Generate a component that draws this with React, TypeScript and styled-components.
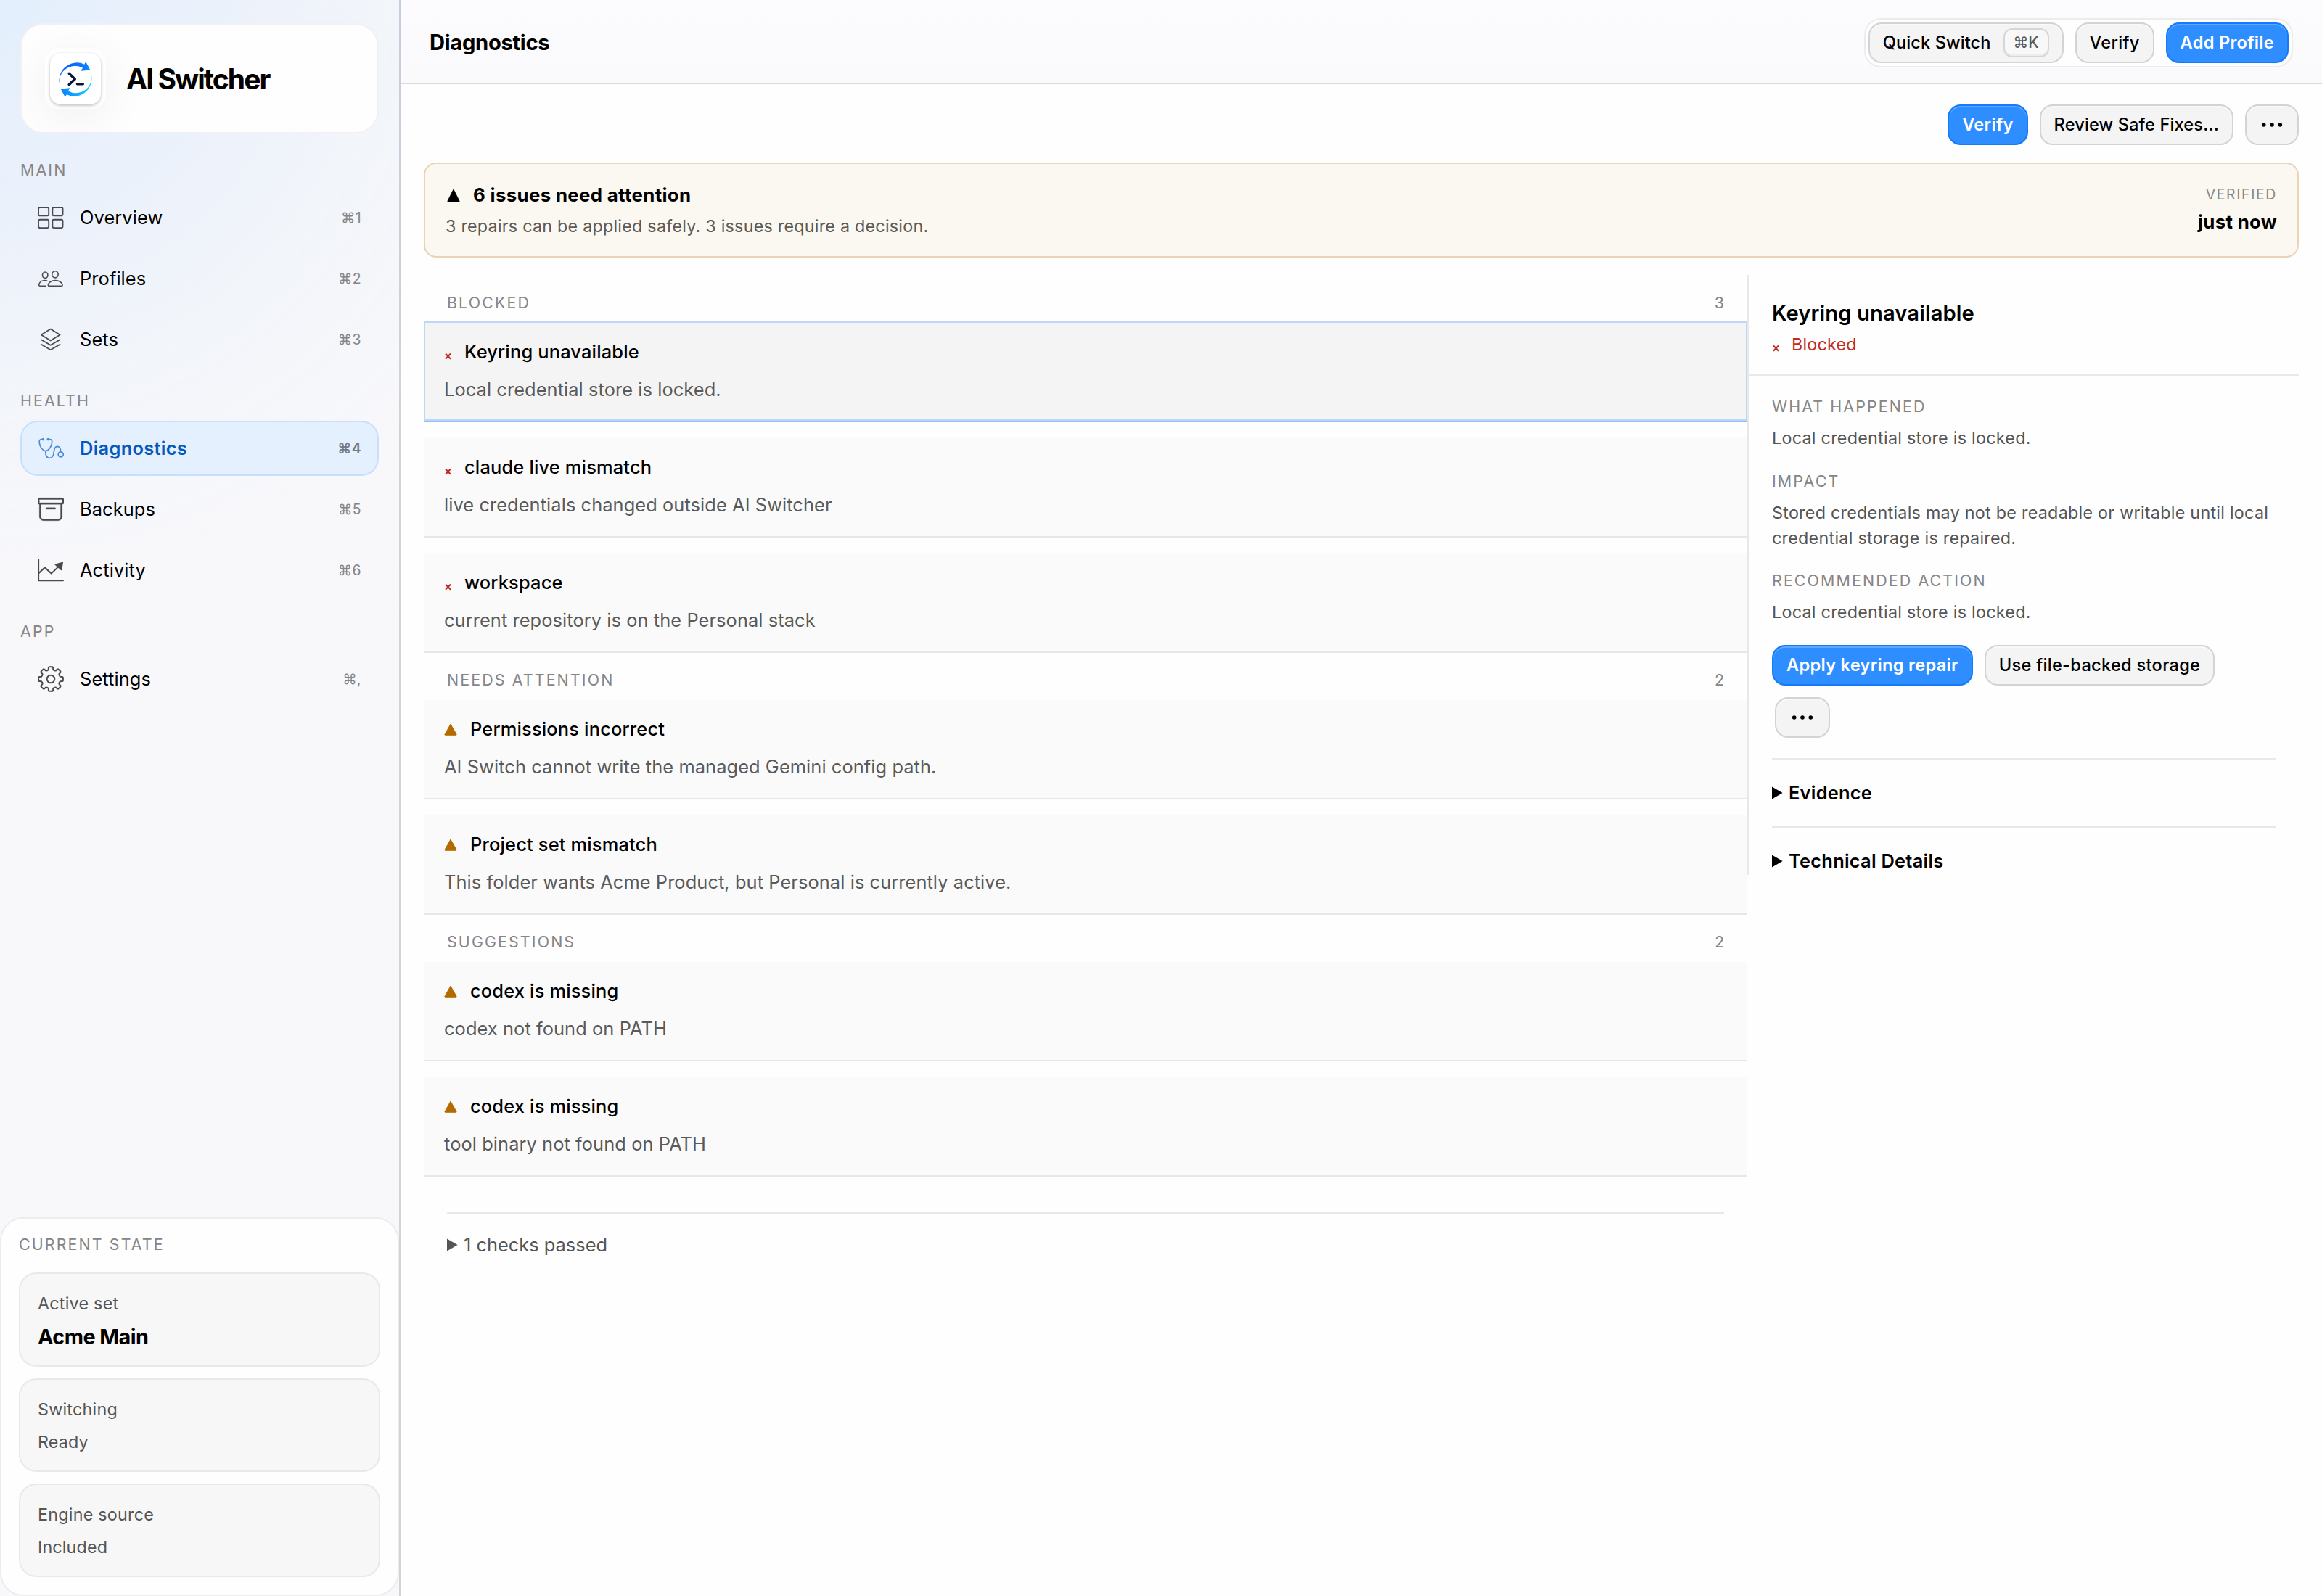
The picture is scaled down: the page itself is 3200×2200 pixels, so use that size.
import React from "react";
import styled, { createGlobalStyle, css } from "styled-components";
import { BsArchive } from "react-icons/bs";

const GlobalStyle = createGlobalStyle`
  *, *::before, *::after { box-sizing: border-box; }
  html, body { margin: 0; padding: 0; background: #fefefe; }
  body {
    font-family: Inter, "Liberation Sans", sans-serif;
    color: #000;
    -webkit-font-smoothing: antialiased;
    overflow: hidden;
  }
  button { font-family: inherit; }
`;

const Window = styled.div`
  display: flex;
  width: 3200px;
  height: 2200px;
  background: #fefefe;
`;

/* ---------- Sidebar ---------- */

const Sidebar = styled.aside`
  display: flex;
  flex-direction: column;
  flex: none;
  width: 552px;
  height: 2200px;
  border-right: 2px solid #d2d3d7;
  border-image: linear-gradient(180deg, #c3cedd 0, #cfd2da 520px, #d3d3d6 900px) 1;
  background:
    radial-gradient(circle at 0 0, #e3effd 0, #ebf1fb 300px, #f2f5fa 520px, rgba(248, 248, 251, 0) 800px),
    #f8f8fb;
`;

const Navigation = styled.nav`
  display: flex;
  flex-direction: column;
  padding: 32px 28px 0;
`;

const Brand = styled.div`
  display: flex;
  align-items: center;
  gap: 28px;
  height: 152px;
  padding: 0 32px;
  border: 2px solid #f1f1f2;
  border-radius: 32px;
  overflow: hidden;
  background: #fefefe;
`;

const LogoFrame = styled.div`
  display: flex;
  align-items: center;
  justify-content: center;
  width: 84px;
  height: 84px;
  border-radius: 20px;
  background: #fefefe;
  box-shadow: 0 12px 56px 8px rgba(0, 0, 0, 0.045);
`;

const LogoTile = styled.div`
  width: 70px;
  height: 71px;
  border-radius: 15px;
  background: #fff;
  box-shadow: 0 2px 4px rgba(0, 0, 0, 0.22), 0 0 2px rgba(0, 0, 0, 0.06);

  svg { display: block; }
`;

const BrandName = styled.div`
  padding-top: 2px;
  font-size: 39px;
  line-height: 48px;
  font-weight: 700;
  letter-spacing: -1.95px;
  white-space: nowrap;
`;

const Caption = styled.div`
  font-size: 21.4px;
  line-height: 26px;
  letter-spacing: 2.12px;
  text-transform: uppercase;
  color: #858588;
  white-space: nowrap;
`;

const NavCaption = styled(Caption)<{ $first?: boolean }>`
  margin: ${(p) => (p.$first ? 37 : 33)}px 0 15px;
`;

const NavList = styled.div`
  display: flex;
  flex-direction: column;
  gap: 8px;
`;

const NavItem = styled.a<{ $active?: boolean }>`
  display: flex;
  align-items: center;
  height: 76px;
  padding: 0 22px;
  border: 2px solid transparent;
  border-radius: 24px;
  color: #000;

  ${(p) =>
    p.$active &&
    css`
      background: #e4f0fe;
      border-color: #c6dffd;
      color: #0558bf;
    `}
`;

const NavIcon = styled.span<{ $active?: boolean }>`
  display: flex;
  width: 36px;
  height: 36px;
  color: ${(p) => (p.$active ? "#4a8bd9" : "#4a4a4c")};
`;

const NavText = styled.span<{ $active?: boolean }>`
  flex: 1;
  margin-left: 22px;
  font-size: 25.4px;
  line-height: 36px;
  font-weight: ${(p) => (p.$active ? 600 : 400)};
  letter-spacing: ${(p) => (p.$active ? 0.3 : 0.1)}px;
`;

const Shortcut = styled.span<{ $active?: boolean }>`
  font-size: 19.4px;
  line-height: 24px;
  font-weight: ${(p) => (p.$active ? 600 : 400)};
  letter-spacing: 0.4px;
  color: ${(p) => (p.$active ? "#76797e" : "#858588")};
`;

const StatePanel = styled.section`
  display: flex;
  flex-direction: column;
  margin-top: auto;
  padding: 22px 24px 24px;
  border: 2px solid #ececee;
  border-radius: 32px;
  background: #fefefe;
`;

const StateCards = styled.div`
  display: flex;
  flex-direction: column;
  gap: 16px;
  margin-top: 26px;
`;

const StateCard = styled.div`
  display: flex;
  flex-direction: column;
  gap: 10px;
  padding: 26px 24px 19px;
  border: 2px solid #e9e9e9;
  border-radius: 24px;
  background: #f7f7f7;
`;

const StateLabel = styled.div`
  font-size: 23.3px;
  line-height: 30px;
  letter-spacing: 0.24px;
  color: #555;
`;

const StateValue = styled.div<{ $strong?: boolean }>`
  font-size: 23.3px;
  line-height: 40px;
  letter-spacing: 0.15px;
  color: #555;

  ${(p) =>
    p.$strong &&
    css`
      font-size: 28.8px;
      line-height: 41px;
      font-weight: 700;
      letter-spacing: -0.55px;
      color: #000;
    `}
`;

/* ---------- Buttons ---------- */

const Button = styled.button<{ $primary?: boolean; $inset?: number; $tracking?: number }>`
  display: flex;
  align-items: center;
  gap: 17px;
  height: 56px;
  margin: 0 0 0 ${(p) => p.$inset ?? 0}px;
  padding: 0 18px;
  border: 2px solid ${(p) => (p.$primary ? "#147bfd" : "#d3d3d3")};
  border-radius: 18px;
  background: ${(p) => (p.$primary ? "#2e8dff" : "#f4f4f4")};
  box-shadow: inset 0 2px 0 ${(p) => (p.$primary ? "rgba(255,255,255,0.24)" : "rgba(255,255,255,0.45)")};
  font-size: 23.6px;
  line-height: 30px;
  font-weight: ${(p) => (p.$primary ? 600 : 500)};
  letter-spacing: ${(p) => p.$tracking ?? 0.29}px;
  color: ${(p) => (p.$primary ? "#fff" : "#000")};
  white-space: nowrap;
`;

const Keycap = styled.kbd`
  display: flex;
  align-items: center;
  justify-content: center;
  width: 63px;
  height: 40px;
  border: 2px solid #d6d6d6;
  border-radius: 12px;
  background: #f8f8f8;
  box-shadow: inset 0 -2px 0 #ececec;
  font: 500 21px/26px Inter, "Liberation Sans", sans-serif;
  color: #5a5a5a;
`;

const MoreLabel = styled.span<{ $width: number }>`
  display: flex;
  justify-content: center;
  width: ${(p) => p.$width}px;
`;

/* ---------- Main area ---------- */

const Main = styled.main`
  display: flex;
  flex-direction: column;
  flex: 1;
  min-width: 0;
`;

const Header = styled.header`
  display: flex;
  align-items: center;
  justify-content: space-between;
  height: 116px;
  padding: 4px 40px 0 40px;
  border-bottom: 2px solid #d9dadd;
  background: linear-gradient(180deg, #fcfcfe, #fafafc);
`;

const PageTitle = styled.h1`
  margin: 0;
  font-size: 29.2px;
  line-height: 40px;
  font-weight: 650;
  letter-spacing: -0.33px;
`;

const ButtonGroup = styled.div`
  display: flex;
  gap: 16px;
  padding: 4px;
  border: 2px solid #ececed;
  border-radius: 23px;
  background: #fefefe;
`;

const Content = styled.div`
  display: flex;
  flex-direction: column;
  gap: 24px;
  padding: 28px 32px 0;
`;

const Toolbar = styled.div`
  display: flex;
  justify-content: flex-end;
  gap: 16px;
`;

const Banner = styled.section`
  display: flex;
  align-items: center;
  justify-content: space-between;
  height: 131px;
  padding: 0 28px;
  border: 2px solid #ead4b5;
  border-radius: 17px;
  background: #fbf8f1;
`;

const BannerSummary = styled.div`
  display: flex;
  flex-direction: column;
  gap: 11px;
`;

const BannerTitle = styled.div`
  display: flex;
  align-items: center;
  gap: 18px;
  padding-left: 2px;
  font-size: 25.8px;
  line-height: 34px;
  font-weight: 650;
  letter-spacing: 0.35px;
`;

const BannerText = styled.div`
  font-size: 23.3px;
  line-height: 30px;
  letter-spacing: 0.24px;
  color: #5b5a58;
`;

const Verified = styled.div`
  display: flex;
  flex-direction: column;
  align-items: flex-end;
  gap: 9px;
`;

const VerifiedLabel = styled.div`
  font-size: 19.4px;
  line-height: 24px;
  letter-spacing: 1.65px;
  text-transform: uppercase;
  color: #888683;
`;

const VerifiedValue = styled.div`
  font-size: 25.8px;
  line-height: 34px;
  font-weight: 650;
  letter-spacing: 0.3px;
`;

const Columns = styled.div`
  display: grid;
  grid-template-columns: 1824px 760px;
  align-items: start;
`;

/* ---------- Issue list ---------- */

const IssueList = styled.section`
  display: flex;
  flex-direction: column;
  padding-top: 1px;
`;

const GroupHeader = styled.div`
  display: flex;
  justify-content: space-between;
  height: 63px;
  padding: 24px 32px 0;
`;

const GroupCount = styled.span`
  font-size: 21.4px;
  line-height: 26px;
  color: #858585;
`;

const GroupRows = styled.div`
  display: flex;
  flex-direction: column;
  gap: 20px;
`;

const IssueRow = styled.article<{ $selected?: boolean }>`
  display: flex;
  flex-direction: column;
  gap: 16px;
  height: 139px;
  padding: 24px 28px 0;
  border-bottom: 2px solid #e7e7e7;
  background: #fafafa;
  box-shadow: inset 0 2px 0 #fdfdfd;

  ${(p) =>
    p.$selected &&
    css`
      border-bottom-color: #8fbffa;
      background: #f4f4f4;
      box-shadow: inset 0 0 0 2px #bdd8f7;
    `}
`;

const IssueTitle = styled.div<{ $wide?: boolean }>`
  display: flex;
  align-items: center;
  gap: ${(p) => (p.$wide ? 18 : 17)}px;
  font-size: 25.4px;
  line-height: 36px;
  font-weight: 500;
  letter-spacing: 0.18px;
`;

const IssueText = styled.div`
  font-size: 25.4px;
  line-height: 36px;
  letter-spacing: 0.08px;
  color: #5a5a5a;
`;

const Passed = styled.div`
  display: flex;
  align-items: center;
  gap: 8px;
  margin: 49px 32px 0;
  padding-top: 25px;
  border-top: 2px solid #e9e9e9;
  font-size: 25.4px;
  line-height: 36px;
  color: #555;
`;

/* ---------- Detail pane ---------- */

const Detail = styled.aside`
  display: flex;
  flex-direction: column;
  height: 827px;
  border-left: 2px solid #e8e8e8;
`;

const DetailHead = styled.div`
  display: flex;
  flex-direction: column;
  gap: 9px;
  padding: 34px 32px 26px;
  border-bottom: 2px solid #e9e9e9;
`;

const DetailTitle = styled.h2`
  margin: 0;
  font-size: 29.2px;
  line-height: 37px;
  font-weight: 600;
  letter-spacing: 0.1px;
`;

const Severity = styled.div`
  display: flex;
  align-items: center;
  gap: 16px;
  font-size: 23.3px;
  line-height: 31px;
  letter-spacing: 0.2px;
  color: #c4291e;
`;

const DetailBody = styled.div`
  display: flex;
  flex-direction: column;
  padding: 28px 32px 0;
`;

const Facts = styled.div`
  display: flex;
  flex-direction: column;
  gap: 27.5px;
`;

const FactLabel = styled(Caption)`
  line-height: 28px;
  margin-bottom: 12px;
  color: #858585;
`;

const FactText = styled.div`
  font-size: 23.3px;
  line-height: 35px;
  letter-spacing: 0.27px;
  color: #555;
`;

const Actions = styled.div`
  display: flex;
  flex-wrap: wrap;
  gap: 16px;
  margin: 28px 0;
`;

const Disclosure = styled.div`
  display: flex;
  align-items: center;
  gap: 8px;
  height: 94px;
  padding: 0 0 1px;
  border-top: 2px solid #e9e9e9;
  font-size: 25.4px;
  line-height: 37px;
  font-weight: 600;
  letter-spacing: 0.25px;
`;

/* ---------- Drawings ---------- */

const stroke = {
  fill: "none",
  stroke: "currentColor",
  strokeLinecap: "round" as const,
  strokeLinejoin: "round" as const,
};

const GridIcon = () => (
  <svg width="36" height="36" viewBox="0 0 36 36" {...stroke} strokeWidth="1.9">
    <rect x="1" y="4" width="14.2" height="11.3" rx="2" />
    <rect x="20.3" y="4" width="14.2" height="11.3" rx="2" />
    <rect x="1" y="20.8" width="14.2" height="11.3" rx="2" />
    <rect x="20.3" y="20.8" width="14.2" height="11.3" rx="2" />
  </svg>
);

const PeopleIcon = () => (
  <svg width="36" height="36" viewBox="0 0 36 36" {...stroke} strokeWidth="1.6">
    <ellipse cx="10.2" cy="13.2" rx="3.7" ry="4.2" />
    <ellipse cx="24" cy="12.3" rx="4.2" ry="4.6" />
    <path d="M12.6 20.9c-.8-.3-1.7-.4-2.6-.4-4.6 0-7.6 2.7-8.2 5.6-.3 1.3.1 2.2 1.4 2.2h7.6" />
    <path d="M24.2 20.5c5 0 8.8 2.8 9.7 5.5.5 1.6-.1 2.3-1.5 2.3H16c-1.4 0-2-.7-1.5-2.3.9-2.7 4.7-5.5 9.7-5.5z" />
  </svg>
);

const LayersIcon = () => (
  <svg width="36" height="36" viewBox="0 0 36 36" {...stroke} strokeWidth="1.8">
    <path d="M17.7 3.6 30.6 11.6 17.7 19.6 4.8 11.6z" />
    <path d="M4.8 18.3 17.7 25.8 30.6 18.3" />
    <path d="M4.8 24.7 17.7 32.2 30.6 24.7" />
  </svg>
);

const StethoscopeIcon = () => (
  <svg width="36" height="36" viewBox="0 0 36 36" {...stroke} strokeWidth="1.7">
    <path d="M7.3 5.6H5.2C3.2 5.6 2.1 7 2.2 9.2 2.4 15.5 6 20.5 10.7 21.9 15.5 20.5 19.4 15.5 19.7 9.2 19.8 7 18.6 5.6 16.6 5.6H14.2" />
    <path d="M10.7 21.9C10.7 27.5 12.5 31.4 16.4 31.4 20.5 31.4 21.7 28 22.2 23.5 22.6 19 23.6 15.3 26.9 15.3 30 15.3 31.6 18.5 31.7 22.6" />
    <circle cx="31.7" cy="26.3" r="3.5" />
    <circle cx="7.3" cy="5.6" r="1.3" fill="currentColor" strokeWidth="1" />
    <circle cx="14.2" cy="5.6" r="1.3" fill="currentColor" strokeWidth="1" />
  </svg>
);

const TrendIcon = () => (
  <svg width="36" height="36" viewBox="0 0 36 36" {...stroke} strokeWidth="2">
    <path d="M1.1 3.2V32.3H35" />
    <path d="M1.6 22 9.7 14.2 18.7 22.6 29 12.6" />
    <path d="M34.3 7.3 24.2 10.2 32.6 17.6z" fill="currentColor" strokeWidth="1.4" />
  </svg>
);

/* Eight flat-topped teeth placed evenly round the hub. */
const gearOutline = (() => {
  const point = (radius: number, degrees: number) => {
    const a = (degrees * Math.PI) / 180;
    return `${(18 + radius * Math.cos(a)).toFixed(2)} ${(18 + radius * Math.sin(a)).toFixed(2)}`;
  };
  const parts: string[] = [];
  for (let i = 0; i < 8; i += 1) {
    const c = i * 45 - 90;
    parts.push(`${i === 0 ? "M" : "L"}${point(13.3, c - 14)}`);
    parts.push(`L${point(16.2, c - 11)}`);
    parts.push(`Q${point(17, c - 9.5)} ${point(17, c - 7)}`);
    parts.push(`L${point(17, c + 7)}`);
    parts.push(`Q${point(17, c + 9.5)} ${point(16.2, c + 11)}`);
    parts.push(`L${point(13.3, c + 14)}`);
    parts.push(`Q${point(12.2, c + 22.5)} ${point(13.3, c + 31)}`);
  }
  return `${parts.join("")}Z`;
})();

const GearIcon = () => (
  <svg width="36" height="36" viewBox="0 0 36 36" {...stroke} strokeWidth="2">
    <path d={gearOutline} />
    <circle cx="18" cy="18" r="5.3" />
  </svg>
);

const Logo = () => (
  <svg width="70" height="71" viewBox="0 0 70 71">
    <defs>
      <linearGradient id="sweepTop" x1="0" y1="0.7" x2="1" y2="0.3">
        <stop offset="0" stopColor="#1a6dff" />
        <stop offset="0.5" stopColor="#0563ff" />
        <stop offset="1" stopColor="#0a86ff" />
      </linearGradient>
      <linearGradient id="sweepBottom" x1="1" y1="0.5" x2="0" y2="0.7">
        <stop offset="0" stopColor="#0a84ff" />
        <stop offset="0.6" stopColor="#10baff" />
        <stop offset="1" stopColor="#22d3f2" />
      </linearGradient>
    </defs>
    <path
      fill="url(#sweepTop)"
      d="M13.8 45.4A24.3 24.3 0 0 1 47.2 15.7L49.2 12 55.3 23.6 42.6 24.8 45 20.6A21.5 21.5 0 0 0 13.8 45.4Z"
    />
    <path
      fill="url(#sweepBottom)"
      transform="rotate(180 35 36.5)"
      d="M13.8 45.4A24.3 24.3 0 0 1 47.2 15.7L49.2 12 55.3 23.6 42.6 24.8 45 20.6A21.5 21.5 0 0 0 13.8 45.4Z"
    />
    <path
      d="M26.2 28.3 34.3 36 26.2 43.6M37.5 42.8H45.3"
      fill="none"
      stroke="#07163a"
      strokeWidth="3.5"
      strokeLinecap="round"
      strokeLinejoin="round"
    />
  </svg>
);

const WarnMark = ({ width, height, color }: { width: number; height: number; color: string }) => (
  <svg width={width} height={height} viewBox="0 0 16 16" preserveAspectRatio="none">
    <path
      d="M8 .9 15.1 14.3Q15.5 15.4 14.4 15.4H1.6Q.5 15.4.9 14.3Z"
      fill={color}
      stroke={color}
      strokeWidth=".8"
      strokeLinejoin="round"
    />
  </svg>
);

const CrossSlot = styled.svg`
  flex: none;
  margin-top: 11px;
`;

const CrossMark = () => (
  <CrossSlot width="11" height="10" viewBox="0 0 11 10">
    <path d="M2 1.5 9 8.7M9 1.5 2 8.7" fill="none" stroke="#c4291e" strokeWidth="2" />
  </CrossSlot>
);

const Triangle = ({ color }: { color: string }) => (
  <svg width="15" height="18" viewBox="0 0 15 18">
    <path d="M0 .5V17.5L14.6 9z" fill={color} />
  </svg>
);

const MoreDots = ({ width }: { width: number }) => (
  <MoreLabel $width={width}>
    <svg width="30" height="8" viewBox="0 0 30 8">
      <circle cx="3.7" cy="4" r="2.8" />
      <circle cx="15" cy="4" r="2.8" />
      <circle cx="26.3" cy="4" r="2.8" />
    </svg>
  </MoreLabel>
);

/* ---------- Data ---------- */

type Entry = { name: string; keys: string; icon: React.ReactNode; active?: boolean };

const navigation: { caption: string; items: Entry[] }[] = [
  {
    caption: "Main",
    items: [
      { name: "Overview", keys: "⌘1", icon: <GridIcon /> },
      { name: "Profiles", keys: "⌘2", icon: <PeopleIcon /> },
      { name: "Sets", keys: "⌘3", icon: <LayersIcon /> },
    ],
  },
  {
    caption: "Health",
    items: [
      { name: "Diagnostics", keys: "⌘4", icon: <StethoscopeIcon />, active: true },
      { name: "Backups", keys: "⌘5", icon: <BsArchive size={36} strokeWidth={0.15} /> },
      { name: "Activity", keys: "⌘6", icon: <TrendIcon /> },
    ],
  },
  { caption: "App", items: [{ name: "Settings", keys: "⌘,", icon: <GearIcon /> }] },
];

const state = [
  { label: "Active set", value: "Acme Main", strong: true },
  { label: "Switching", value: "Ready" },
  { label: "Engine source", value: "Included" },
];

type Issue = { title: string; text: string; selected?: boolean };

const groups: { caption: string; blocked?: boolean; count: number; issues: Issue[] }[] = [
  {
    caption: "Blocked",
    blocked: true,
    count: 3,
    issues: [
      { title: "Keyring unavailable", text: "Local credential store is locked.", selected: true },
      { title: "claude live mismatch", text: "live credentials changed outside AI Switcher" },
      { title: "workspace", text: "current repository is on the Personal stack" },
    ],
  },
  {
    caption: "Needs attention",
    count: 2,
    issues: [
      { title: "Permissions incorrect", text: "AI Switch cannot write the managed Gemini config path." },
      {
        title: "Project set mismatch",
        text: "This folder wants Acme Product, but Personal is currently active.",
      },
    ],
  },
  {
    caption: "Suggestions",
    count: 2,
    issues: [
      { title: "codex is missing", text: "codex not found on PATH" },
      { title: "codex is missing", text: "tool binary not found on PATH" },
    ],
  },
];

const facts = [
  { label: "What happened", text: "Local credential store is locked." },
  {
    label: "Impact",
    text: "Stored credentials may not be readable or writable until local credential storage is repaired.",
  },
  { label: "Recommended action", text: "Local credential store is locked." },
];

export default function App() {
  return (
    <>
      <GlobalStyle />
      <Window>
        <Sidebar>
          <Navigation>
            <Brand>
              <LogoFrame>
                <LogoTile>
                  <Logo />
                </LogoTile>
              </LogoFrame>
              <BrandName>AI Switcher</BrandName>
            </Brand>
            {navigation.map((section, index) => (
              <React.Fragment key={section.caption}>
                <NavCaption $first={index === 0}>{section.caption}</NavCaption>
                <NavList>
                  {section.items.map((item) => (
                    <NavItem key={item.name} $active={item.active}>
                      <NavIcon $active={item.active}>{item.icon}</NavIcon>
                      <NavText $active={item.active}>{item.name}</NavText>
                      <Shortcut $active={item.active}>{item.keys}</Shortcut>
                    </NavItem>
                  ))}
                </NavList>
              </React.Fragment>
            ))}
          </Navigation>
          <StatePanel>
            <Caption>Current state</Caption>
            <StateCards>
              {state.map((card) => (
                <StateCard key={card.label}>
                  <StateLabel>{card.label}</StateLabel>
                  <StateValue $strong={card.strong}>{card.value}</StateValue>
                </StateCard>
              ))}
            </StateCards>
          </StatePanel>
        </Sidebar>

        <Main>
          <Header>
            <PageTitle>Diagnostics</PageTitle>
            <ButtonGroup>
              <Button $tracking={0.1}>
                Quick Switch<Keycap>⌘K</Keycap>
              </Button>
              <Button>Verify</Button>
              <Button $primary>Add Profile</Button>
            </ButtonGroup>
          </Header>

          <Content>
            <Toolbar>
              <Button $primary>Verify</Button>
              <Button $tracking={0.13}>Review Safe Fixes...</Button>
              <Button aria-label="More">
                <MoreDots width={34} />
              </Button>
            </Toolbar>

            <Banner>
              <BannerSummary>
                <BannerTitle>
                  <WarnMark width={18} height={19} color="#000" />
                  6 issues need attention
                </BannerTitle>
                <BannerText>3 repairs can be applied safely. 3 issues require a decision.</BannerText>
              </BannerSummary>
              <Verified>
                <VerifiedLabel>Verified</VerifiedLabel>
                <VerifiedValue>just now</VerifiedValue>
              </Verified>
            </Banner>

            <Columns>
              <IssueList>
                {groups.map((group) => (
                  <React.Fragment key={group.caption}>
                    <GroupHeader>
                      <Caption>{group.caption}</Caption>
                      <GroupCount>{group.count}</GroupCount>
                    </GroupHeader>
                    <GroupRows>
                      {group.issues.map((issue) => (
                        <IssueRow key={issue.text} $selected={issue.selected}>
                          <IssueTitle $wide={!group.blocked}>
                            {group.blocked ? (
                              <CrossMark />
                            ) : (
                              <WarnMark width={18} height={17} color="#b36b00" />
                            )}
                            {issue.title}
                          </IssueTitle>
                          <IssueText>{issue.text}</IssueText>
                        </IssueRow>
                      ))}
                    </GroupRows>
                  </React.Fragment>
                ))}
                <Passed>
                  <Triangle color="#555" />1 checks passed
                </Passed>
              </IssueList>

              <Detail>
                <DetailHead>
                  <DetailTitle>Keyring unavailable</DetailTitle>
                  <Severity>
                    <CrossMark />
                    Blocked
                  </Severity>
                </DetailHead>
                <DetailBody>
                  <Facts>
                    {facts.map((fact) => (
                      <div key={fact.label}>
                        <FactLabel>{fact.label}</FactLabel>
                        <FactText>{fact.text}</FactText>
                      </div>
                    ))}
                  </Facts>
                  <Actions>
                    <Button $primary>Apply keyring repair</Button>
                    <Button>Use file-backed storage</Button>
                    <Button $inset={4} aria-label="More actions">
                      <MoreDots width={36} />
                    </Button>
                  </Actions>
                  <Disclosure>
                    <Triangle color="#000" />
                    Evidence
                  </Disclosure>
                  <Disclosure>
                    <Triangle color="#000" />
                    Technical Details
                  </Disclosure>
                </DetailBody>
              </Detail>
            </Columns>
          </Content>
        </Main>
      </Window>
    </>
  );
}
